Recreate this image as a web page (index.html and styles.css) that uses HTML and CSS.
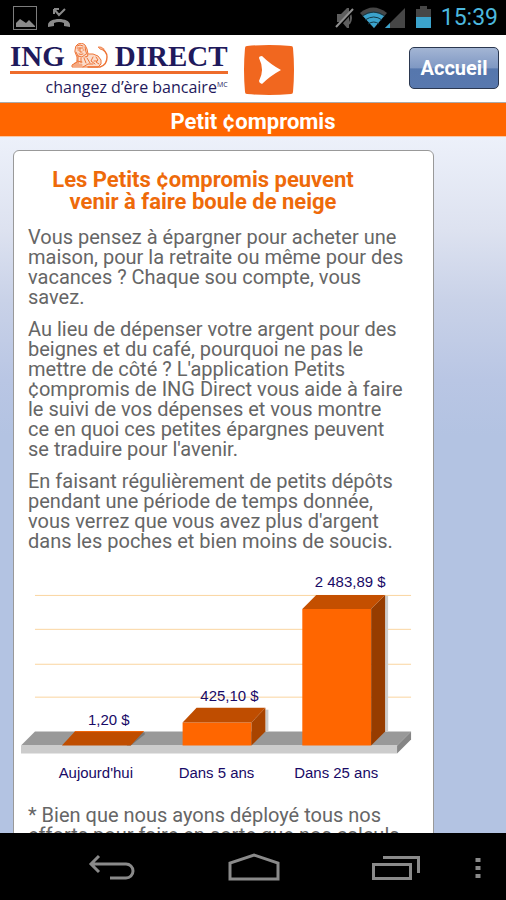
FILE: index.html
```html
<!DOCTYPE html>
<html lang="fr">
<head>
    <meta charset="UTF-8">
    <meta name="viewport" content="width=device-width, initial-scale=1.0">
    <title>Petit ¢ompromis</title>
    <link rel="stylesheet" href="styles.css">
</head>
<body>
    <div class="status-bar">
        <svg class="status-left" width="60" height="26" viewBox="0 0 60 26">
            <rect x="1.500" y="1.500" width="23" height="23" fill="none" stroke="#7d7d7d"/>
            <path d="M4 22v-4l4-4 3 2 3 2 3-3 3 3 3 3v1z" fill="#8a8a8a"/>
            <path d="M42 4v5M42 4h5M42 4l5 6 6-6" fill="none" stroke="#8a8a8a" stroke-width="2"/>
            <path d="M36 20c0-8 22-8 22 0v2l-6-1v-3q-5-2-10 0v3l-6 1z" fill="#8a8a8a"/>
        </svg>
        <svg class="status-right" width="100" height="26" viewBox="0 0 100 26">
            <path d="M3 9h4l6-6h2v20h-2l-5-6H3z" fill="#5e5e5e"/>
            <path d="M15 7q4 6 0 12" fill="none" stroke="#5e5e5e" stroke-width="2"/>
            <path d="M2 24L19 6" stroke="#000" stroke-width="2"/>
            <path d="M2 22L19 4" stroke="#8f8f8f" stroke-width="2"/>
            <path d="M26 8Q39-3 53 8L40 23z" fill="#464646"/>
            <path d="M29 11Q39 4 50 11L40 23z" fill="#3ba3cc"/>
            <path d="M28 11q12-8 23 0M31 15q9-6 17 0M34 19q6-4 11 0" fill="none" stroke="#123846" stroke-width="1"/>
            <path d="M51 23L71 3v20z" fill="#464646"/>
            <path d="M51 23l5-5v5z" fill="#3ba3cc"/>
            <path d="M82 4h4V1h7v3h4v8H82z" fill="#464646"/>
            <path d="M82 12h15v11H82z" fill="#3ba3cc"/>
        </svg>
        <span class="clock">15:39</span>
    </div>

    <main class="screen">
        <header class="header">
            <div class="logo">
                <div class="logo-name">
                    <span>ING</span>
                    <svg class="lion" width="38" height="26" viewBox="0 0 38 26" fill="none" stroke="#ee7436" stroke-linecap="round" stroke-linejoin="round">
                        <path d="M5 3l2-2 4-1 3 2 2 4 1 5 5 0 5 2 3 4 0 4-3 3H1l0-2 5-3 0-5-2-5z" fill="#fbdccb"/>
                        <path d="M6 5l3 0 3 0M9 5v4l2 0M7 7l1 0M12 7l1 0M8 11q2 1 4 0M5 9l2 4 4 1 4-3M14 4l1 5 2 4-3 1M7 13l0 6M10 15l0 5M13 15l2 5M16 15l3 5M2 22h9M12 24l5-3h5M22 14l-2 4 4 3M25 14l2 3-2 2 3 2M6 18l5 1M4 20h4M23 18h3M6 3l3-1 3 1" />
                        <path d="M17 24h12q7-2 7-10 0-6-7-9" stroke-width="1.400"/>
                        <path d="M32 7q-3 0-5-3 3-1 6 2z" fill="#f7b08c" stroke-width=".7"/>
                    </svg>
                    <span>DIRECT</span>
                </div>
                <div class="tagline">changez d’ère bancaire<sup>MC</sup></div>
            </div>
            <svg class="arrow" width="50" height="50" viewBox="0 0 50 50">
                <path d="M3 1Q25-1 47 1q2 0 2 2 2 22 0 44 0 2-2 2-22 2-44 0-2 0-2-2-2-22 0-44 0-2 2-2z" fill="#f1671f"/>
                <path d="M15 13q0-2 3-2 8 8 19 14-11 6-19 14-3-1-3-3 6-11 0-23z" fill="#fff"/>
            </svg>
            <button class="home-button" type="button">Accueil</button>
        </header>
        <h1 class="title">Petit ¢ompromis</h1>

        <section class="content">
            <article class="card">
                <h2>Les Petits ¢ompromis peuvent venir à faire boule de neige</h2>
                <p>Vous pensez à épargner pour acheter une maison, pour la retraite ou même pour des vacances ? Chaque sou compte, vous savez.</p>
                <p>Au lieu de dépenser votre argent pour des beignes et du café, pourquoi ne pas le mettre de côté ? L'application Petits ¢ompromis de ING Direct vous aide à faire le suivi de vos dépenses et vous montre ce en quoi ces petites épargnes peuvent se traduire pour l'avenir.</p>
                <p>En faisant régulièrement de petits dépôts pendant une période de temps donnée, vous verrez que vous avez plus d'argent dans les poches et bien moins de soucis.</p>

                <svg class="chart" viewBox="0 0 406 220">
                    <path class="grid" d="M14 30.500h377M14 64.500h377M14 99.500h377M14 132.500h377"/>
                    <!-- floor -->
                    <path d="M14 167h377l-14 14H0z" fill="#999"/>
                    <path d="M0 181h377v8H0z" fill="#ccc"/>
                    <path d="M377 181l14-14v8l-14 14z" fill="#858585"/>
                    <!-- today -->
                    <path d="M120 168h4v2l-14 11h-4z" fill="#777"/>
                    <path d="M41 181l13-14h69l-13 14z" fill="#bf4d00"/>
                    <path d="M54 167h69" stroke="#f26100"/>
                    <!-- 5 years -->
                    <path d="M245 145h3v22h-3z" fill="#ccc"/>
                    <path d="M162 158h69v23h-69z" fill="#f60"/>
                    <path d="M162 158l14-15h69l-14 15z" fill="#bf4d00"/>
                    <path d="M231 158l14-15v24l-14 14z" fill="#a84400"/>
                    <!-- 25 years -->
                    <path d="M365 31h3v136h-3z" fill="#ccc"/>
                    <path d="M282 44h69v137h-69z" fill="#f60"/>
                    <path d="M282 44l14-14h69l-14 14z" fill="#c44f00"/>
                    <path d="M351 44l14-14v137l-14 14z" fill="#963c00"/>
                    <text x="88" y="160">1,20 $</text>
                    <text x="209" y="136">425,10 $</text>
                    <text x="330" y="22">2 483,89 $</text>
                    <text x="75" y="214">Aujourd'hui</text>
                    <text x="196" y="214">Dans 5 ans</text>
                    <text x="316" y="214">Dans 25 ans</text>
                </svg>

                <p>* Bien que nous ayons déployé tous nos efforts pour faire en sorte que nos calculs</p>
            </article>
        </section>
    </main>

    <nav class="nav-bar">
        <button type="button" aria-label="Retour">
            <svg width="48" height="28" viewBox="0 0 48 28">
                <path d="M11 3L3 11l8 8M4 11h34a7 7 0 0 1 0 14H22" stroke-width="3"/>
            </svg>
        </button>
        <button type="button" aria-label="Accueil">
            <svg width="52" height="28" viewBox="0 0 52 28">
                <path d="M2 26V10L26 2l24 8v16z" stroke-width="3"/>
            </svg>
        </button>
        <button type="button" aria-label="Applications récentes">
            <svg width="50" height="28" viewBox="0 0 50 28">
                <path d="M2.500 11.500h37v14h-37zM12 4.500h35.500V20" stroke-width="3"/>
            </svg>
        </button>
        <button class="more" type="button" aria-label="Menu">
            <svg width="6" height="28" viewBox="0 0 6 28">
                <path d="M3 5v4M3 13v4M3 21v4" stroke-width="5"/>
            </svg>
        </button>
    </nav>
</body>
</html>
```

FILE: styles.css
```css
* { box-sizing: border-box; }
body {
    margin: 0;
    height: 100vh;
    display: flex;
    flex-direction: column;
    font-family: Roboto, sans-serif;
    background: #000;
    overflow: hidden;
}
button { font-family: inherit; cursor: pointer; }

.status-bar {
    display: flex;
    align-items: center;
    height: 35px;
    flex: none;
    padding: 0 8px 0 12px;
}
.status-right { margin-left: auto; }
.clock {
    margin-left: 7px;
    font-size: 23px;
    color: #4cb8de;
}

.screen {
    flex: 1;
    min-height: 0;
    overflow: hidden;
    background: linear-gradient(to bottom, #edf1fa 100px, #dde2f0 195px, #c9d2e8 265px, #b9c6e4 345px, #b3c3e2 400px);
}
.header {
    display: flex;
    align-items: flex-start;
    height: 68px;
    padding: 5px 7px 0 10px;
    background: #fff;
    border-bottom: 1px solid #aaa;
}
.logo { color: #1f1a5c; }
.logo-name {
    display: flex;
    align-items: center;
    height: 34px;
    gap: 6px;
    border-bottom: 3px solid #ee6c2b;
    font: bold 29px/34px "Liberation Serif", serif;
}
.tagline {
    font: 16px/26px "Open Sans", sans-serif;
    text-align: right;
}
.tagline sup {
    font-size: 7px;
    line-height: 0;
}
.arrow { margin: 5px 0 0 16px; }
.home-button {
    margin: 7px 0 0 auto;
    width: 90px;
    height: 42px;
    padding: 0;
    font-size: 20px;
    font-weight: bold;
    color: #fff;
    border: 1px solid #2b3850;
    border-radius: 5px;
    background: linear-gradient(to bottom, #a3b5d4, #7f98c3 50%, #5677ad 52%, #5878ae);
}
.title {
    margin: 0;
    height: 34px;
    font-size: 22px;
    line-height: 38px;
    text-align: center;
    color: #fff;
    background: #f60;
    border-bottom: 1px solid #f8c7a4;
}

.content { padding: 13px 72px 13px 13px; }
.card {
    padding: 18px 7px;
    background: #fff;
    border: 1px solid #999;
    border-radius: 6px;
}
.card h2 {
    margin: 0 48px 14px 7px;
    font-size: 22px;
    line-height: 22px;
    text-align: center;
    color: #ee6a0a;
}
.card p {
    margin: 0 20px 12px 7px;
    font-size: 20px;
    line-height: 20px;
    color: #666;
}

.chart {
    display: block;
    width: 100%;
    margin: 14px 0 21px;
    font: 15px "Liberation Sans", sans-serif;
    text-anchor: middle;
    fill: #180a66;
}
.grid {
    fill: none;
    stroke: #fad5a0;
    stroke-width: 1;
}

.nav-bar {
    display: flex;
    flex: none;
    height: 67px;
    padding: 0 17px 0 41px;
    background: #000;
}
.nav-bar button {
    flex: 1;
    display: flex;
    align-items: center;
    justify-content: center;
    padding: 0;
    border: none;
    background: none;
}
.nav-bar .more { flex: 0 0 22px; }
.nav-bar svg {
    fill: none;
    stroke: #8a8a8a;
}
```
